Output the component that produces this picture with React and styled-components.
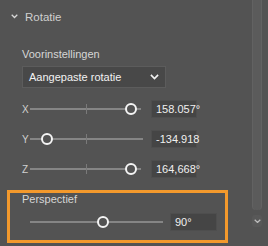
import React from "react";
import styled, { createGlobalStyle } from "styled-components";

const Global = createGlobalStyle`
  html, body { margin: 0; padding: 0; background: #535353; }
  body { font-family: "Liberation Sans", Arial, sans-serif; }
`;

const Panel = styled.div`
  width: 268px;
  height: 246px;
  background: #535353;
  display: flex;
  overflow: hidden;
`;

const Content = styled.div`
  flex: 1;
  display: flex;
  flex-direction: column;
  padding: 8px 0 0 0;
`;

const Header = styled.div`
  display: flex;
  align-items: center;
  gap: 7px;
  padding-left: 11px;
  height: 17px;
  color: #cfcfcf;
  font-size: 11.5px;
`;

const Label = styled.div`
  color: #d6d6d6;
  font-size: 11px;
  margin-left: ${(p) => p.$left || 22}px;
  margin-top: ${(p) => p.$top || 0}px;
  height: 14px;
  line-height: 14px;
`;

const Dropdown = styled.div`
  margin: 5px 0 0 22px;
  width: 144px;
  height: 22px;
  box-sizing: border-box;
  background: #484848;
  border: 1px solid #5c5c5c;
  display: flex;
  align-items: center;
  justify-content: space-between;
  padding: 0 6px 0 6px;
  color: #f2f2f2;
  font-size: 11px;
`;

const Row = styled.div`
  display: flex;
  align-items: center;
  height: 18px;
  margin-top: ${(p) => p.$top}px;
  padding-left: ${(p) => p.$left || 22}px;
`;

const Axis = styled.span`
  width: 8px;
  color: #d0d0d0;
  font-size: 10px;
`;

const Track = styled.div`
  position: relative;
  width: ${(p) => p.$w}px;
  height: 2px;
  background: #858585;
`;

const Tick = styled.div`
  position: absolute;
  top: -4px;
  width: 1px;
  height: 10px;
  background: #7a7a7a;
`;

const Thumb = styled.div`
  position: absolute;
  top: -5px;
  width: 12px;
  height: 12px;
  margin-left: -6px;
  box-sizing: border-box;
  border: 2px solid #f4f4f4;
  border-radius: 50%;
  background: #535353;
`;

const Field = styled.div`
  margin-left: ${(p) => p.$gap}px;
  width: ${(p) => p.$w || 46}px;
  height: 18px;
  box-sizing: border-box;
  background: #454545;
  border: 1px solid #4e4e4e;
  color: #f0f0f0;
  font-size: 11px;
  line-height: 16px;
  padding-left: 4px;
`;

const Highlight = styled.div`
  margin: 12px 0 0 7px;
  width: 221px;
  height: 53px;
  box-sizing: border-box;
  border: 3px solid #f3992c;
`;

const Scroll = styled.div`
  width: 16px;
  display: flex;
  flex-direction: column;
  align-items: flex-start;
`;

const ScrollThumb = styled.div`
  width: 10px;
  height: 210px;
  box-sizing: border-box;
  background: #5b5b5b;
  border-left: 1px solid #626262;
  border-right: 1px solid #626262;
  border-radius: 0 0 4px 4px;
`;

const ScrollArrow = styled.div`
  width: 10px;
  height: 12px;
  margin-top: 5px;
  display: flex;
  align-items: center;
  justify-content: center;
  background: #585858;
  border-radius: 3px;
`;

const Chevron = ({ size = 8, color = "#e0e0e0" }) => (
  <svg width={size} height={size * 0.6} viewBox="0 0 10 6">
    <path d="M1 1 L5 5 L9 1" fill="none" stroke={color} strokeWidth="1.8" />
  </svg>
);

const Slider = ({ axis, value, ticks = [56], width = 111 }) => (
  <>
    <Axis>{axis}</Axis>
    <Track $w={width}>
      {ticks.map((t) => (
        <Tick key={t} style={{ left: t }} />
      ))}
      <Thumb style={{ left: value }} />
    </Track>
  </>
);

export default function App() {
  return (
    <>
      <Global />
      <Panel>
        <Content>
          <Header>
            <Chevron size={7} color="#d8d8d8" />
            <span>Rotatie</span>
          </Header>
          <Label $top={22}>Voorinstellingen</Label>
          <Dropdown>
            <span>Aangepaste rotatie</span>
            <Chevron size={9} color="#f2f2f2" />
          </Dropdown>
          <Row $top={12}>
            <Slider axis="X" value={101} />
            <Field $gap={10}>158.057°</Field>
          </Row>
          <Row $top={12}>
            <Slider axis="Y" value={17} width={113} />
            <Field $gap={8}>-134.918</Field>
          </Row>
          <Row $top={12}>
            <Slider axis="Z" value={101} />
            <Field $gap={10}>164,668°</Field>
          </Row>
          <Highlight>
            <Label $left={12} $top={-1}>Perspectief</Label>
            <Row $top={7} $left={20}>
              <Track $w={133}>
                <Thumb style={{ left: 73 }} />
              </Track>
              <Field $gap={7} $w={47}>90°</Field>
            </Row>
          </Highlight>
        </Content>
        <Scroll>
          <ScrollThumb />
          <ScrollArrow>
            <Chevron size={7} color="#bdbdbd" />
          </ScrollArrow>
        </Scroll>
      </Panel>
    </>
  );
}
